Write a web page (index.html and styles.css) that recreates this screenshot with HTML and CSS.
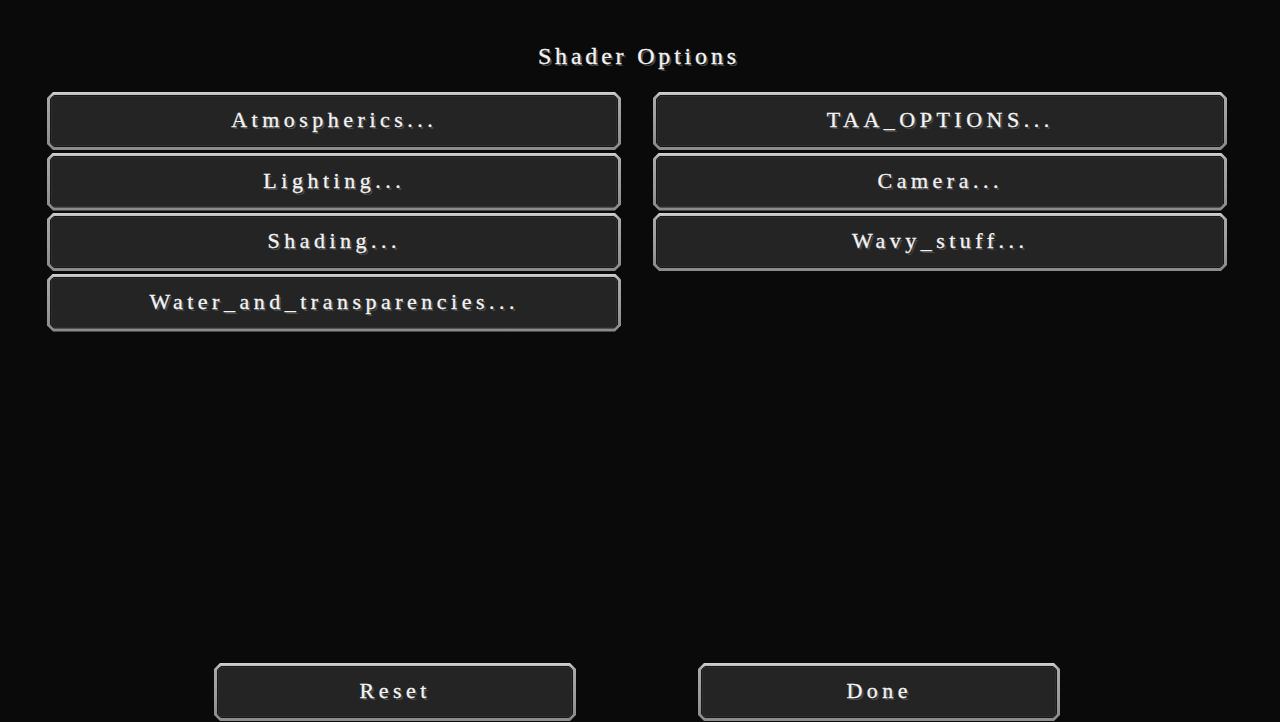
FILE: index.html
```html
<!DOCTYPE html>
<html>
<head>
<meta charset="utf-8">
<link rel="stylesheet" href="styles.css">
</head>
<body>
<div class="screen">
  <h1 class="title">Shader Options</h1>
  <div class="grid">
    <div class="btn"><div class="btn-in"><div class="face"><span class="label">Atmospherics...</span></div></div></div>
    <div class="btn"><div class="btn-in"><div class="face"><span class="label">TAA_OPTIONS...</span></div></div></div>
    <div class="btn"><div class="btn-in"><div class="face"><span class="label">Lighting...</span></div></div></div>
    <div class="btn"><div class="btn-in"><div class="face"><span class="label">Camera...</span></div></div></div>
    <div class="btn"><div class="btn-in"><div class="face"><span class="label">Shading...</span></div></div></div>
    <div class="btn"><div class="btn-in"><div class="face"><span class="label">Wavy_stuff...</span></div></div></div>
    <div class="btn"><div class="btn-in"><div class="face"><span class="label">Water_and_transparencies...</span></div></div></div>
  </div>
  <div class="spacer"></div>
  <div class="footer">
    <div class="btn small"><div class="btn-in"><div class="face"><span class="label">Reset</span></div></div></div>
    <div class="btn small"><div class="btn-in"><div class="face"><span class="label">Done</span></div></div></div>
  </div>
</div>
</body>
</html>
```
FILE: styles.css
```css
html, body {
  margin: 0;
  padding: 0;
  background: #0a0a0a;
  width: 1280px;
  height: 722px;
  overflow: hidden;
}
.screen {
  width: 1280px;
  height: 722px;
  display: flex;
  flex-direction: column;
  align-items: center;
  box-sizing: border-box;
  padding-right: 6px;
  font-family: "Liberation Serif", "Times New Roman", serif;
  color: #f4f4f4;
}
.title {
  margin: 40px 0 0 0;
  height: 32px;
  line-height: 32px;
  font-size: 24px;
  font-weight: normal;
  letter-spacing: 3.8px;
  padding-left: 3.8px;
  text-shadow: 2px 2px 0 #454545;
  -webkit-text-stroke: 0.3px #f4f4f4;
}
.grid {
  margin-top: 20px;
  display: grid;
  grid-template-columns: 574px 574px;
  grid-auto-rows: 58px;
  column-gap: 32px;
  row-gap: 2.5px;
}
.spacer { flex: 1; }
.footer {
  display: flex;
  gap: 122px;
  margin-bottom: 1px;
}
.btn {
  box-sizing: border-box;
  height: 58px;
  padding: 3px;
  background: linear-gradient(#d2d2d2 0%, #a8a8a8 10%, #9a9a9a 60%, #8a8a8a 100%);
  clip-path: polygon(6px 0, calc(100% - 6px) 0, 100% 6px, 100% calc(100% - 6px), calc(100% - 6px) 100%, 6px 100%, 0 calc(100% - 6px), 0 6px);
}
.btn.small { width: 362px; }
.btn-in {
  height: 100%;
  box-sizing: border-box;
  padding: 1px;
  background: #16161a;
  clip-path: polygon(4px 0, calc(100% - 4px) 0, 100% 4px, 100% calc(100% - 4px), calc(100% - 4px) 100%, 4px 100%, 0 calc(100% - 4px), 0 4px);
}
.face {
  height: 100%;
  box-sizing: border-box;
  background: #242424;
  box-shadow: inset 0 0 0 1px #2e2e30;
  display: flex;
  align-items: center;
  justify-content: center;
}
.label {
  font-size: 22px;
  letter-spacing: 4.5px;
  padding-left: 4.5px;
  text-shadow: 2px 2px 0 #4a4a4a;
  -webkit-text-stroke: 0.3px #f4f4f4;
  line-height: 1;
  position: relative;
  top: -1px;
  left: -2px;
}
```
